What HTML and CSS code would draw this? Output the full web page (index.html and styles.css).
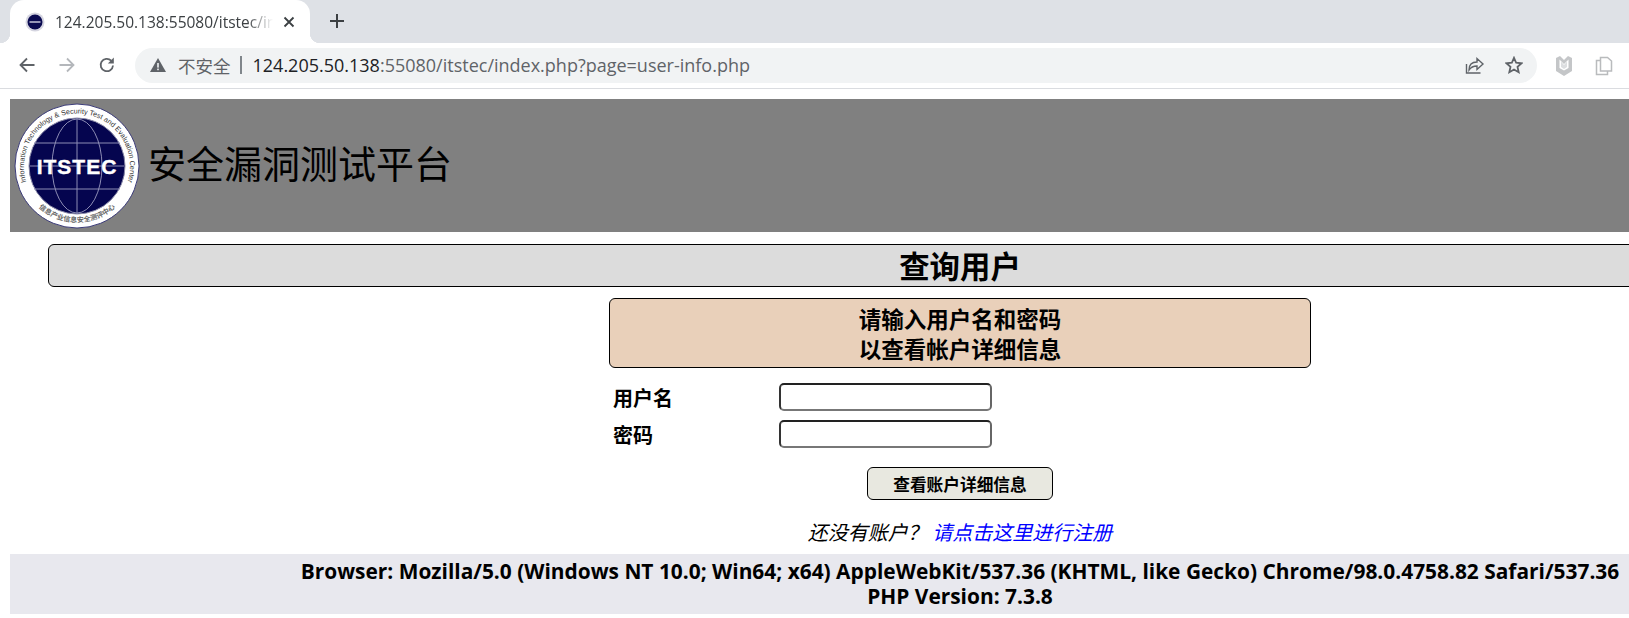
FILE: index.html
```html
<!DOCTYPE html>
<html lang="zh">
<head>
<meta charset="utf-8">
<title>安全漏洞测试平台</title>
<link rel="stylesheet" href="styles.css">
</head>
<body>
<div class="tabstrip">
  <div class="tab">
    <svg class="favicon" viewBox="0 0 20 20"><circle cx="10" cy="10" r="9.5" fill="#d5d5e0"/><circle cx="10" cy="10" r="7.5" fill="#0a0a50"/><rect x="4.5" y="9.2" width="11" height="1.6" fill="#b8b8d0"/></svg>
    <span class="tab-title">124.205.50.138:55080/itstec/in</span>
    <svg class="tab-close" viewBox="0 0 12 12"><path d="M1.5 1.5l9 9M10.5 1.5l-9 9" stroke="#3c4043" stroke-width="1.8" fill="none"/></svg>
  </div>
  <svg class="newtab" viewBox="0 0 16 16"><path d="M8 1v14M1 8h14" stroke="#3c4043" stroke-width="2" fill="none"/></svg>
</div>
<div class="toolbar">
  <svg class="nav" viewBox="0 0 18 18"><path d="M16.5 9H2.500M9 2.500L2.500 9 9 15.500" stroke="#5f6368" stroke-width="1.8" fill="none"/></svg>
  <svg class="nav" viewBox="0 0 18 18"><path d="M1.500 9h14M9 2.500L15.500 9 9 15.500" stroke="#b4b7bb" stroke-width="1.8" fill="none"/></svg>
  <svg class="nav" viewBox="0 0 18 18"><path d="M15 9.500A6.200 6.200 0 1 1 13.200 4.600" stroke="#5f6368" stroke-width="1.8" fill="none"/><path d="M15.800 1.500v6h-6z" fill="#5f6368"/></svg>
  <div class="omnibox">
    <svg class="warn" viewBox="0 0 16 14"><path d="M8 0l8 14H0z" fill="#5f6368"/><rect x="7.200" y="5" width="1.600" height="4.600" fill="#f1f3f4"/><rect x="7.200" y="10.600" width="1.600" height="1.600" fill="#f1f3f4"/></svg>
    <span class="insecure">不安全</span>
    <span class="sep"></span>
    <span class="url"><span class="host">124.205.50.138</span>:55080/itstec/index.php?page=user-info.php</span>
    <span class="spacer"></span>
    <svg class="omni-icon" viewBox="0 0 20 20"><path d="M1.500 9v9h14M4 15c0-5 3-8 8-8V3.500l6 5.500-6 5.500V11c-3 0-6 1-8 4z" stroke="#5f6368" stroke-width="1.400" fill="none"/></svg>
    <svg class="omni-icon omni-star" viewBox="0 0 20 20"><path d="M10 2l2.400 5.500 6 .6-4.500 4 1.300 5.900L10 15l-5.200 3 1.300-5.900-4.500-4 6-.6z" stroke="#5f6368" stroke-width="2" fill="none"/></svg>
  </div>
  <svg class="ext" viewBox="0 0 18 22"><path d="M1 3l4-2 4 4 4-4 4 2v13l-8 5-8-5z" fill="#c4c6c8"/><path d="M4.500 4.500L9 9l4.500-4.500V13L9 15.500 4.500 13z" fill="#fff"/><path d="M6 6.500L9 10l3-3.500V12L9 14l-3-2z" fill="#dcdee0"/></svg>
  <svg class="ext ext-copy" viewBox="0 0 18 20"><path d="M5.500 1.500h7l4 3.500v10h-11zM5.500 4.500H1.500v14h11v-3.500" stroke="#b9bbbd" stroke-width="1.500" fill="none"/></svg>
</div>
<div class="page">
  <header class="banner">
    <svg class="logo" viewBox="0 0 126 126">
      <defs>
        <path id="arc-top" d="M16 88A53 53 0 1 1 110 88"/>
        <path id="arc-bottom" d="M23 103A57 57 0 0 0 103 103"/>
      </defs>
      <circle cx="63" cy="63" r="62" fill="#fff" stroke="#3a3a78" stroke-width="1"/>
      <circle cx="63" cy="63" r="48" fill="#05054f" stroke="#8a8aa8" stroke-width="1"/>
      <g stroke="#8d8db5" stroke-width="1" fill="none">
        <ellipse cx="63" cy="63" rx="25" ry="47"/>
        <path d="M63 15v96M20 40h86M16 63h94M20 86h86"/>
      </g>
      <text class="logo-mark" x="63" y="71" text-anchor="middle">ITSTEC</text>
      <text class="logo-ring"><textPath href="#arc-top" startOffset="50%" text-anchor="middle">Information Technology &amp; Security Test and Evaluation Center</textPath></text>
      <text class="logo-ring-cn"><textPath href="#arc-bottom" startOffset="50%" text-anchor="middle">信息产业信息安全测评中心</textPath></text>
    </svg>
    <h1 class="site-title">安全漏洞测试平台</h1>
  </header>
  <main class="content">
    <h2 class="page-title">查询用户</h2>
    <form class="login">
      <div class="notice">请输入用户名和密码<br>以查看帐户详细信息</div>
      <div class="field"><label class="field-label">用户名</label><input class="field-input" type="text"></div>
      <div class="field"><label class="field-label">密码</label><input class="field-input" type="password"></div>
      <div class="actions"><button class="submit" type="button">查看账户详细信息</button></div>
    </form>
    <p class="signup"><em>还没有账户？</em> <a class="signup-link" href="#">请点击这里进行注册</a></p>
  </main>
  <footer class="footer">
    <div>Browser: Mozilla/5.0 (Windows NT 10.0; Win64; x64) AppleWebKit/537.36 (KHTML, like Gecko) Chrome/98.0.4758.82 Safari/537.36</div>
    <div>PHP Version: 7.3.8</div>
  </footer>
</div>
</body>
</html>
```

FILE: styles.css
```css
* { box-sizing: border-box; }
html, body { margin: 0; height: 618px; overflow: hidden; background: #fff; }
body { font-family: "Open Sans", "Noto Sans CJK SC", sans-serif; color: #000; width: 1629px; }

.tabstrip { height: 43px; background: #dee1e6; display: flex; align-items: flex-end; padding-left: 10px; }
.tab { width: 300px; height: 43px; background: #fff; border-radius: 14px 14px 0 0; display: flex; align-items: center; padding: 0 14px 0 15px; position: relative; }
.tab::before, .tab::after { content: ""; position: absolute; bottom: 0; width: 10px; height: 10px; }
.tab::before { left: -10px; background: radial-gradient(circle at 0 0, transparent 10px, #fff 10.5px); }
.tab::after { right: -10px; background: radial-gradient(circle at 100% 0, transparent 10px, #fff 10.5px); }
.favicon { width: 20px; height: 20px; flex: none; }
.tab-title { font-size: 15.5px; color: #3c4043; margin-left: 10px; width: 218px; white-space: nowrap; overflow: hidden; -webkit-mask-image: linear-gradient(to right, #000 88%, transparent); mask-image: linear-gradient(to right, #000 88%, transparent); }
.tab-close { width: 12px; height: 12px; margin-left: 10px; flex: none; }
.newtab { width: 16px; height: 16px; margin: 0 0 2px 19px; align-self: center; }

.toolbar { height: 46px; background: #fff; border-bottom: 1px solid #dadce0; display: flex; align-items: center; padding: 0 0 0 18px; }
.nav { width: 18px; height: 18px; margin: 0 22px 2px 0; flex: none; }
.toolbar .nav:nth-child(3) { margin-right: 19px; }
.omnibox { width: 1402px; height: 35px; border-radius: 18px; background: #f1f3f4; display: flex; align-items: center; padding: 0 14px 0 15px; margin-top: -1px; flex: none; }
.warn { width: 16px; height: 14px; flex: none; }
.insecure { margin-left: 12px; font-size: 17.5px; color: #5f6368; font-family: "Noto Sans CJK SC", sans-serif; }
.sep { width: 2px; height: 18px; background: #80868b; margin: 0 11px 0 9px; }
.url { font-size: 18px; color: #5f6368; white-space: nowrap; }
.host { color: #202124; }
.spacer { flex: 1; }
.omni-icon { width: 20px; height: 20px; margin-left: 20px; flex: none; }
.omni-star { width: 18px; height: 18px; margin-left: 20px; }
.ext { width: 18px; height: 22px; margin-left: 18px; flex: none; }
.ext-copy { margin-left: 22px; height: 20px; }

.page { width: 1900px; margin-left: 10px; padding-top: 10px; }
.banner { height: 133px; background: #808080; display: flex; align-items: center; padding-left: 4px; }
.logo { width: 126px; height: 126px; flex: none; }
.logo-mark { font: 900 21px "Liberation Sans", sans-serif; fill: #fff; letter-spacing: 1px; stroke: #fff; stroke-width: .4px; }
.logo-ring { font: 400 7.2px "Liberation Sans", sans-serif; fill: #333; }
.logo-ring-cn { font: 700 7px "Noto Sans CJK SC", sans-serif; fill: #666; }
.site-title { margin: 0 0 8px 8px; font-size: 38px; font-weight: 400; line-height: 1.2; font-family: "Noto Sans CJK SC", sans-serif; }

.content { display: flex; flex-direction: column; align-items: center; }
.page-title { width: 1824px; height: 43px; margin: 12px 0 0; background: #dcdcdc; border: 1px solid #000; border-radius: 6px; font-size: 30.4px; line-height: 41px; text-align: center; font-weight: 700; font-family: "Noto Sans CJK SC", sans-serif; }
.login { width: 702px; margin-top: 11px; font-family: "Noto Sans CJK SC", sans-serif; }
.notice { height: 70px; background: #e9d0ba; border: 1px solid #000; border-radius: 6px; text-align: center; font-size: 22.5px; font-weight: 700; line-height: 30px; padding-top: 4px; margin-bottom: 15px; }
.field { display: flex; align-items: center; height: 28px; margin-bottom: 9px; padding-left: 4px; }
.field-label { width: 166px; font-size: 20px; font-weight: 700; }
.field-input { width: 213px; height: 28px; background: #fff; border: 2px solid; border-color: #222 #666 #777 #333; border-radius: 5px; padding: 0; }
.actions { padding: 10px 0 0 258px; }
.submit { width: 186px; height: 33px; background: #e8e8e0; border: 1px solid #000; border-radius: 6px; font: 700 16.7px "Noto Sans CJK SC", sans-serif; color: #000; padding: 0; }
.signup { margin: 17px 0 0; width: 100%; height: 37px; font-size: 20px; line-height: 30px; text-align: center; font-family: "Noto Sans CJK SC", sans-serif; font-style: italic; }
.signup em { font-style: italic; }
.signup-link { color: #00f; text-decoration: none; }
.footer { height: 60px; background: #e8e8ee; text-align: center; font-size: 20.9px; font-weight: 700; line-height: 25px; padding-top: 5px; white-space: nowrap; }
```
